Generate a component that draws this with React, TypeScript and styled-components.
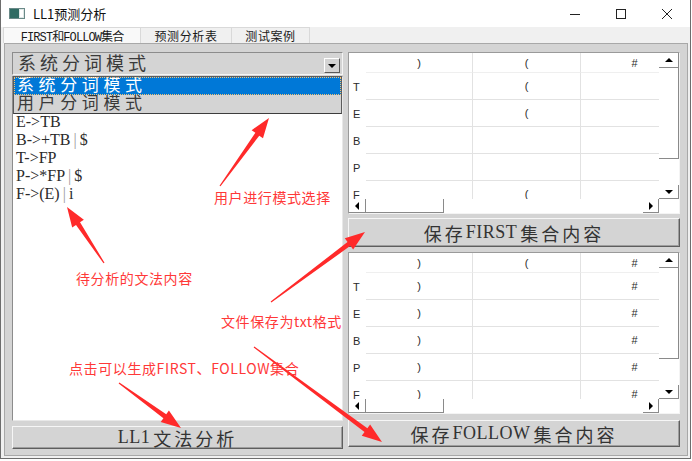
import React, { FC } from 'react'
import styled, { createGlobalStyle } from 'styled-components'

const GlobalStyle = createGlobalStyle`
  html, body {
    margin: 0;
    padding: 0;
    background: #ffffff;
    overflow: hidden;
  }
`

const serif = `"Liberation Serif", "Noto Sans CJK SC", serif`
const ui = `"Noto Sans CJK SC", "Noto Sans", sans-serif`

const Window = styled.div`
  position: relative;
  width: 689px;
  height: 458px;
  border: 1px solid #6d6d6d;
  border-top: none;
  background: #f0f0f0;
  display: flex;
  flex-direction: column;
`

const TitleBar = styled.div`
  height: 27px;
  background: #ffffff;
  display: flex;
  align-items: center;
`

const Title = styled.div`
  flex: 1;
  margin-left: 8px;
  font-family: ${ui};
  font-size: 13px;
  color: #111;
  display: flex;
  align-items: center;
  gap: 8px;
`

const WinBtn = styled.div`
  width: 46px;
  height: 27px;
  display: flex;
  align-items: center;
  justify-content: center;
`

const TabStrip = styled.div`
  height: 16px;
  padding-left: 3px;
  display: flex;
  align-items: stretch;
  background: #f0f0f0;
`

const Tab = styled.div<{ $w: number; $active?: boolean; $mono?: boolean }>`
  width: ${({ $w }) => $w}px;
  box-sizing: border-box;
  border: 1px solid #d9d9d9;
  border-bottom: none;
  margin-left: -1px;
  background: ${({ $active }) => ($active ? '#f9f9f9' : '#f0f0f0')};
  display: flex;
  align-items: center;
  justify-content: center;
  font-family: ${({ $mono }) =>
    $mono ? `"Liberation Mono", "Noto Sans CJK SC", monospace` : ui};
  font-size: 12px;
  letter-spacing: ${({ $mono }) => ($mono ? '-0.9px' : '0.6px')};
  color: #1a1a1a;
  white-space: nowrap;
`

const Panel = styled.div`
  margin: 0 2px 2px 3px;
  flex: 1;
  background: #d4d4d4;
  border: 1px solid #a8a8a8;
  padding: 8px 6px 6px 7px;
  display: flex;
  gap: 5px;
`

const LeftCol = styled.div`
  position: relative;
  width: 331px;
  display: flex;
  flex-direction: column;
`

const RightCol = styled.div`
  width: 332px;
  display: flex;
  flex-direction: column;
`

const Combo = styled.div`
  height: 23px;
  box-sizing: border-box;
  border: 1px solid;
  border-color: #8c8c8c #f4f4f4 #f4f4f4 #8c8c8c;
  background: #d4d4d4;
  display: flex;
  align-items: center;
  padding-left: 5px;
  padding-right: 2px;
`

const ComboText = styled.div`
  flex: 1;
  font-family: ${serif};
  font-size: 18px;
  line-height: 20px;
  letter-spacing: 4px;
  color: #3a3a3a;
`

const ComboBtn = styled.div`
  width: 16px;
  height: 15px;
  box-sizing: border-box;
  align-self: flex-end;
  margin-bottom: 1px;
  border: 1px solid;
  border-color: #ffffff #5a5a5a #5a5a5a #ffffff;
  background: #d4d4d4;
  display: flex;
  align-items: center;
  justify-content: center;
`

const Tri = styled.span<{ $dir: 'up' | 'down' | 'left' | 'right'; $s?: number }>`
  width: 0;
  height: 0;
  border-style: solid;
  border-color: transparent;
  ${({ $dir, $s = 4 }) =>
    $dir === 'down'
      ? `border-width: ${$s}px ${$s}px 0 ${$s}px; border-top-color: #000;`
      : $dir === 'up'
        ? `border-width: 0 ${$s}px ${$s}px ${$s}px; border-bottom-color: #000;`
        : $dir === 'left'
          ? `border-width: ${$s}px ${$s}px ${$s}px 0; border-right-color: #000;`
          : `border-width: ${$s}px 0 ${$s}px ${$s}px; border-left-color: #000;`}
`

const DropList = styled.div`
  position: absolute;
  top: 24px;
  left: 1px;
  width: 329px;
  box-sizing: border-box;
  border: 1px solid #5c5c5c;
  border-bottom-color: #3c3c3c;
  background: #d4d4d4;
  z-index: 2;
`

const DropItem = styled.div<{ $sel?: boolean }>`
  height: 18px;
  line-height: 18px;
  overflow: hidden;
  padding-left: 3px;
  font-family: ${serif};
  font-size: 17px;
  letter-spacing: 4.6px;
  background: ${({ $sel }) => ($sel ? '#0078d7' : '#d4d4d4')};
  color: ${({ $sel }) => ($sel ? '#ffffff' : '#3a3a3a')};
  ${({ $sel }) => ($sel ? 'outline: 1px dotted #f5c070; outline-offset: -1px;' : '')}
`

const TextArea = styled.div`
  margin-top: 1px;
  flex: 1;
  background: #ffffff;
  border: 1px solid;
  border-color: #8c8c8c #e8e8e8 #e8e8e8 #8c8c8c;
  padding: 36px 0 0 3px;
  font-family: ${serif};
  font-size: 16px;
  line-height: 18px;
  color: #2a2a2a;
`

const Bar = styled.span`
  color: #9a9a9a;
  margin: 0 3px;
`

const PushButton = styled.div<{ $h: number; $mt?: number }>`
  height: ${({ $h }) => $h}px;
  margin-top: ${({ $mt = 0 }) => $mt}px;
  box-sizing: border-box;
  background: #d4d4d4;
  border: 1px solid;
  border-color: #f6f6f6 #5e5e5e #5e5e5e #f6f6f6;
  box-shadow: inset -1px -1px 0 #9e9e9e;
  display: flex;
  align-items: center;
  justify-content: center;
  font-family: ${serif};
  font-size: 18px;
  color: #333;
  white-space: nowrap;
`

const Cjk = styled.span`
  letter-spacing: 3px;
`

const Latin = styled.span`
  letter-spacing: 0.5px;
  margin-right: 3px;
`

const TableBox = styled.div<{ $mt?: number }>`
  height: 162px;
  margin-top: ${({ $mt = 0 }) => $mt}px;
  box-sizing: border-box;
  background: #ffffff;
  border: 1px solid;
  border-color: #9a9a9a #f4f4f4 #f4f4f4 #9a9a9a;
  display: grid;
  grid-template-columns: 1fr 20px;
  grid-template-rows: 1fr 14px;
  overflow: hidden;
`

const Grid = styled.div`
  display: grid;
  grid-template-columns: 17px 107px 108px 108px;
  grid-template-rows: 20px repeat(5, 27px);
  overflow: hidden;
  font-family: "Liberation Sans", "DejaVu Sans", sans-serif;
  font-size: 11px;
  color: #2a2a2a;
`

const RowHead = styled.div`
  display: flex;
  align-items: center;
  padding-left: 4px;
`

const Cell = styled.div<{ $head?: boolean }>`
  display: flex;
  align-items: center;
  justify-content: center;
  border-right: 1px solid #e2e2e2;
  border-bottom: 1px solid ${({ $head }) => ($head ? '#efefef' : '#e2e2e2')};
`

const VScroll = styled.div`
  display: flex;
  flex-direction: column;
  background: #ffffff;
`

const ScrollPart = styled.div<{ $w?: number; $h?: number; $grow?: boolean; $edge?: boolean }>`
  ${({ $w }) => ($w ? `width: ${$w}px;` : '')}
  ${({ $h }) => ($h ? `height: ${$h}px;` : '')}
  ${({ $grow }) => ($grow ? 'flex: 1;' : 'flex: none;')}
  box-sizing: border-box;
  display: flex;
  align-items: center;
  justify-content: center;
  ${({ $edge }) =>
    $edge ? 'border-right: 1px solid #8a8a8a; border-bottom: 1px solid #8a8a8a;' : ''}
`

const HScroll = styled.div`
  display: flex;
  background: #ffffff;
`

const Overlay = styled.svg`
  position: absolute;
  left: 0;
  top: 0;
  pointer-events: none;
  z-index: 5;
`

const Note = styled.div`
  position: absolute;
  font-family: ${ui};
  font-size: 14px;
  letter-spacing: 0.6px;
  color: #ff3838;
  white-space: nowrap;
  z-index: 6;
  line-height: 16px;
`

type Row = { label: string; cells: string[] }

const firstRows: Row[] = [
  { label: 'T', cells: ['', '(', ''] },
  { label: 'E', cells: ['', '(', ''] },
  { label: 'B', cells: ['', '', ''] },
  { label: 'P', cells: ['', '', ''] },
  { label: 'F', cells: ['', '(', ''] },
]

const followRows: Row[] = [
  { label: 'T', cells: [')', '', '#'] },
  { label: 'E', cells: [')', '', '#'] },
  { label: 'B', cells: [')', '', '#'] },
  { label: 'P', cells: [')', '', '#'] },
  { label: 'F', cells: [')', '', '#'] },
]

const SetTable: FC<{ rows: Row[]; mt?: number }> = ({ rows, mt }) => (
  <TableBox $mt={mt}>
    <Grid>
      <RowHead />
      {[')', '(', '#'].map((h, i) => (
        <Cell $head key={i}>
          {h}
        </Cell>
      ))}
      {rows.map((r) => (
        <React.Fragment key={r.label}>
          <RowHead>{r.label}</RowHead>
          {r.cells.map((c, i) => (
            <Cell key={i}>{c}</Cell>
          ))}
        </React.Fragment>
      ))}
    </Grid>
    <VScroll>
      <ScrollPart $h={15} $edge>
        <Tri $dir="up" $s={4} />
      </ScrollPart>
      <ScrollPart $h={91} $edge />
      <ScrollPart $grow />
      <ScrollPart $h={14} $edge>
        <Tri $dir="down" $s={4} />
      </ScrollPart>
    </VScroll>
    <HScroll>
      <ScrollPart $w={17} $edge>
        <Tri $dir="left" $s={4} />
      </ScrollPart>
      <ScrollPart $w={78} $edge />
      <ScrollPart $grow />
      <ScrollPart $w={16} $edge>
        <Tri $dir="right" $s={4} />
      </ScrollPart>
    </HScroll>
    <div />
  </TableBox>
)

// tapered red arrow, tail -> tip
const arrowPoints = (x1: number, y1: number, x2: number, y2: number) => {
  const dx = x2 - x1
  const dy = y2 - y1
  const len = Math.hypot(dx, dy)
  const ux = dx / len
  const uy = dy / len
  const nx = -uy
  const ny = ux
  const headLen = 20
  const bx = x2 - ux * headLen
  const by = y2 - uy * headLen
  const p = (x: number, y: number, w: number) => `${x + nx * w},${y + ny * w}`
  return [
    p(x1, y1, 0.6),
    p(bx, by, 2.4),
    p(bx, by, 7),
    `${x2},${y2}`,
    p(bx, by, -7),
    p(bx, by, -2.4),
    p(x1, y1, -0.6),
  ].join(' ')
}

const arrows: [number, number, number, number][] = [
  [219, 186, 268, 118],
  [103, 263, 66, 207],
  [270, 302, 364, 232],
  [253, 347, 381, 442],
  [118, 383, 180, 428],
]

const App: FC = () => (
  <>
    <GlobalStyle />
    <Window>
      <TitleBar>
        <Title>
          <svg width="16" height="11" viewBox="0 0 16 11">
            <rect x="0.5" y="0.5" width="15" height="10" fill="#dfe7e6" stroke="#6a8a88" />
            <rect x="1" y="1" width="9" height="9" fill="#2f6b63" />
            <rect x="11" y="2" width="3" height="7" fill="#ffffff" />
          </svg>
          LL1预测分析
        </Title>
        <WinBtn>
          <svg width="10" height="10" viewBox="0 0 10 10">
            <line x1="0" y1="5.5" x2="10" y2="5.5" stroke="#222" strokeWidth="1" />
          </svg>
        </WinBtn>
        <WinBtn>
          <svg width="10" height="10" viewBox="0 0 10 10">
            <rect x="0.5" y="0.5" width="9" height="9" fill="none" stroke="#222" strokeWidth="1" />
          </svg>
        </WinBtn>
        <WinBtn>
          <svg width="10" height="10" viewBox="0 0 10 10">
            <path d="M0 0 L10 10 M10 0 L0 10" stroke="#222" strokeWidth="1" />
          </svg>
        </WinBtn>
      </TitleBar>
      <TabStrip>
        <Tab $w={138} $active $mono>
          FIRST和FOLLOW集合
        </Tab>
        <Tab $w={92}>预测分析表</Tab>
        <Tab $w={79}>测试案例</Tab>
      </TabStrip>
      <Panel>
        <LeftCol>
          <Combo>
            <ComboText>系统分词模式</ComboText>
            <ComboBtn>
              <Tri $dir="down" $s={4} />
            </ComboBtn>
          </Combo>
          <DropList>
            <DropItem $sel>系统分词模式</DropItem>
            <DropItem>用户分词模式</DropItem>
          </DropList>
          <TextArea>
            <div>E-&gt;TB</div>
            <div>
              B-&gt;+TB<Bar>|</Bar>$
            </div>
            <div>T-&gt;FP</div>
            <div>
              P-&gt;*FP<Bar>|</Bar>$
            </div>
            <div>
              F-&gt;(E)<Bar>|</Bar>i
            </div>
          </TextArea>
          <PushButton $h={23} $mt={5}>
            <Latin>LL1</Latin>
            <Cjk>文法分析</Cjk>
          </PushButton>
        </LeftCol>
        <RightCol>
          <SetTable rows={firstRows} />
          <PushButton $h={29} $mt={4}>
            <Cjk>保存</Cjk>
            <Latin>FIRST</Latin>
            <Cjk>集合内容</Cjk>
          </PushButton>
          <SetTable rows={followRows} mt={5} />
          <PushButton $h={27} $mt={6}>
            <Cjk>保存</Cjk>
            <Latin>FOLLOW</Latin>
            <Cjk>集合内容</Cjk>
          </PushButton>
        </RightCol>
      </Panel>
      <Overlay width="692" height="461" viewBox="0 0 692 461">
        {arrows.map((a, i) => (
          <polygon key={i} points={arrowPoints(a[0], a[1], a[2], a[3])} fill="#ff2a2a" />
        ))}
      </Overlay>
      <Note style={{ left: 213, top: 189 }}>用户进行模式选择</Note>
      <Note style={{ left: 75, top: 270 }}>待分析的文法内容</Note>
      <Note style={{ left: 220, top: 313 }}>文件保存为txt格式</Note>
      <Note style={{ left: 68, top: 360 }}>点击可以生成FIRST、FOLLOW集合</Note>
    </Window>
  </>
)

export default App
